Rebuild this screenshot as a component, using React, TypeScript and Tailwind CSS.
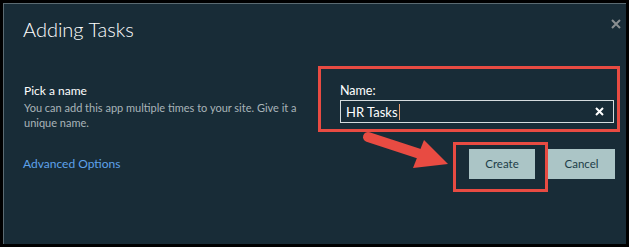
import React from "react";

export default function App() {
  return (
    <div
      className="relative w-[629px] h-[247px] bg-black pt-[3px] pl-[3px] pr-[3px] pb-[3px]"
      style={{ fontFamily: 'Lato, "Open Sans", sans-serif' }}
    >
      <div className="w-full h-full bg-[#182c37] border-l border-t border-[#5b6b72] pl-[20px]">
        {/* header */}
        <div className="flex items-start justify-between pt-[11px] pr-[5px]">
          <h1 className="text-[20px] leading-[28px] font-light text-white -ml-[1px]">Adding Tasks</h1>
          <svg width="10" height="10" viewBox="0 0 10 10" className="mt-[4px]">
            <path d="M1 1 L9 9 M9 1 L1 9" stroke="#8a8f91" strokeWidth="2" />
          </svg>
        </div>

        {/* body */}
        <div className="pr-[11px] mt-[39px]">
          <div className="flex">
            <div className="flex-1">
              <div className="text-[12px] leading-[18px] text-white">Pick a name</div>
              <p className="text-[11px] leading-[15px] text-[#a9b4b9] w-[280px]">
                You can add this app multiple times to your site. Give it a unique name.
              </p>
            </div>
            <div className="w-[275px]">
              <div className="text-[12.5px] leading-[18px] text-white">Name:</div>
              <div className="h-[23px] w-[274px] border border-[#d5dcde] flex items-center justify-between pl-[5px] pr-[9px]">
                <span className="text-[13px] leading-[18px] text-white flex items-center">
                  HR Tasks
                  <span className="inline-block w-px h-[16px] bg-[#e8a070] ml-px" />
                </span>
                <svg width="9" height="9" viewBox="0 0 9 9">
                  <path d="M1 1 L8 8 M8 1 L1 8" stroke="#ffffff" strokeWidth="2" />
                </svg>
              </div>
            </div>
          </div>

          <div className="flex items-center justify-between mt-[19px]">
            <a className="text-[12px] leading-[18px] text-[#5ea2ea] -ml-[1px]">Advanced Options</a>
            <div className="flex gap-[13px]">
              <button className="w-[66px] h-[30px] bg-[#abc5c6] text-[11.5px] text-[#1d3d48]">Create</button>
              <button className="w-[67px] h-[30px] bg-[#abc5c6] text-[11.5px] text-[#1d3d48]">Cancel</button>
            </div>
          </div>
        </div>
      </div>

      {/* annotations */}
      <div className="absolute left-[318px] top-[66px] w-[302px] h-[66px] border-[3px] border-[#e84b42]" />
      <div className="absolute left-[453px] top-[142px] w-[95px] h-[50px] border-[3px] border-[#e84b42]" />
      <svg className="absolute left-0 top-0 pointer-events-none" width="629" height="247">
        <line x1="368" y1="137" x2="420" y2="154" stroke="#e84b42" strokeWidth="10" strokeLinecap="round" />
        <polygon points="424,140 448,164 413,168" fill="#e84b42" />
      </svg>
    </div>
  );
}
